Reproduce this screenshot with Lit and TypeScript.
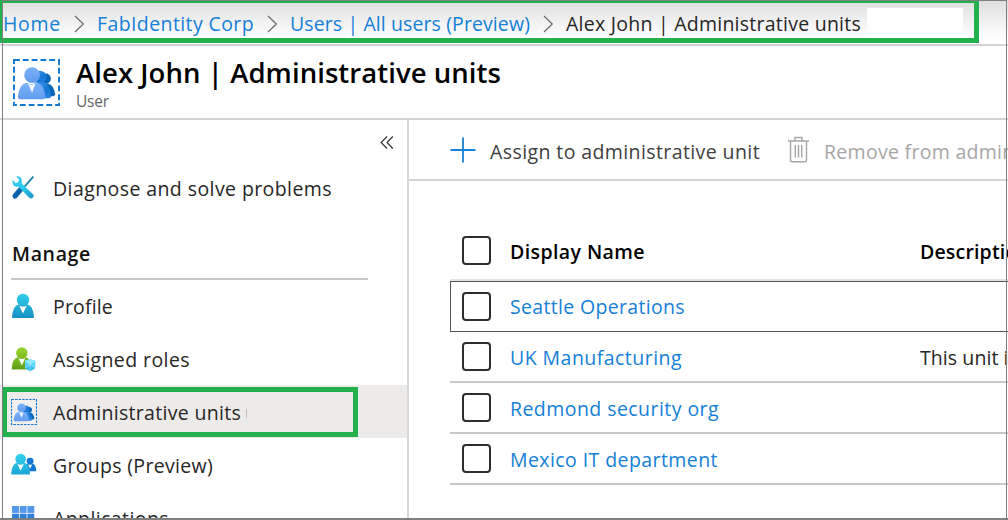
import { LitElement, html, css, svg } from "lit";
import { customElement, property, query } from "lit/decorators.js";

/* Single-line label that spaces its letters to fill a given width. */
@customElement("fit-text")
class FitText extends LitElement {
  static styles = css`
    :host { display: block; white-space: pre; flex: none; }
    .t { display: inline-block; }
  `;
  @property() text = "";
  @property({ type: Number }) w = 0;
  @query(".t") el!: HTMLElement;
  render() {
    return html`<span class="t">${this.text}</span>`;
  }
  updated() {
    this.fit();
    document.fonts.ready.then(() => this.fit());
  }
  fit() {
    this.el.style.letterSpacing = "0px";
    const natural = this.el.getBoundingClientRect().width;
    this.el.style.letterSpacing = (this.w - natural) / this.text.length + "px";
  }
}

const person = (fill: string, notch = "#fff") => svg`
  <path fill=${fill} d="M1 24.2Q1.6 12.5 8 11.2L12 13L16 11.2Q22.4 12.5 23 24.2Q23 25 22 25H2Q1 25 1 24.2Z"/>
  <path fill=${notch} d="M8.2 12.4L12 20.5L15.8 12.4Q12 14.8 8.2 12.4Z"/>
  <circle cx="12" cy="7" r="6.2" fill=${fill}/>`;

const adminUnits = (size: number, stroke: number, dash: string) => html`
  <svg width=${size} height=${size} viewBox="0 0 48 48">
    <defs>
      <linearGradient id="a1" x1="0" y1="0" x2="0" y2="1"><stop offset="0" stop-color="#7cb2fa"/><stop offset="1" stop-color="#629bef"/></linearGradient>
      <linearGradient id="a2" x1="0" y1="0" x2="1" y2="1"><stop offset="0" stop-color="#4a9ae8"/><stop offset=".6" stop-color="#1478d6"/><stop offset="1" stop-color="#2f86e4"/></linearGradient>
    </defs>
    <rect x="1" y="1" width="46" height="46" fill="#fff" fill-opacity=".3" stroke="#1379d3" stroke-width=${stroke} stroke-dasharray=${dash}/>
    <circle cx="33.5" cy="20" r="5.2" fill="#0766b8"/>
    <path d="M28 25H36Q42 27 43 36Q43 37.5 41 38H28Z" fill="#0766b8"/>
    <circle cx="27.5" cy="18.5" r="6.5" fill="url(#a2)"/>
    <path d="M22 24H32Q38 27 38.8 38Q38.8 40 37 40H22Z" fill="url(#a2)"/>
    <path d="M5 38.5Q6 26 13.5 24.2L19 26L24.500 24.200Q32 26 33.200 38.500Q33.300 41 31 41H7Q5 41 5 38.500Z" fill="url(#a1)"/>
    <path d="M15.300 25L19.500 34.500L23 25Q19 27.500 15.300 25Z" fill="#f4f8ff"/>
    <circle cx="19.500" cy="16.500" r="8" fill="url(#a1)"/>
  </svg>`;

const icons: Record<string, unknown> = {
  tools: html`<svg width="24" height="26" viewBox="0 0 24 26">
    <defs>
      <linearGradient id="t1" x1="0" y1="0" x2="1" y2="1"><stop offset="0" stop-color="#35c3ea"/><stop offset=".5" stop-color="#2ccdf0"/><stop offset="1" stop-color="#1590c2"/></linearGradient>
    </defs>
    <path d="M22.300 1.600L13.300 11.800" stroke="#1e87ab" stroke-width="1.900"/>
    <path d="M10.500 13.500L4 21" stroke="#0862a9" stroke-width="5" stroke-linecap="round"/>
    <path fill="url(#t1)" d="M5 1.500Q10 .5 10.800 5.500Q10.900 7 10.500 8.300L22.200 19.500Q23.300 20.800 22.200 22.300Q20.800 24.200 18.600 23L7.200 11.500Q2 12.500 1.600 7.500Q1.400 6 1.800 4.800L4.400 8L7.300 7.200L8 4.300Z"/>
  </svg>`,
  profile: html`<svg width="24" height="26" viewBox="0 0 24 26">
    <defs><linearGradient id="p1" gradientUnits="userSpaceOnUse" x1="0" y1="0" x2="0" y2="25"><stop offset="0" stop-color="#32d0ee"/><stop offset="1" stop-color="#168fc4"/></linearGradient></defs>
    ${person("url(#p1)")}
  </svg>`,
  roles: html`<svg width="25" height="26" viewBox="0 0 25 26">
    <defs><linearGradient id="r1" gradientUnits="userSpaceOnUse" x1="0" y1="0" x2="0" y2="25"><stop offset="0" stop-color="#9bd72b"/><stop offset="1" stop-color="#5f9f18"/></linearGradient></defs>
    <g transform="translate(-.2 .6) scale(.92)">${person("url(#r1)")}</g>
    <path d="M14 14.800L19 13L24.300 14.800V22L19 25.300L14 22Z" fill="#55d5f7"/>
    <path d="M14 14.800L19 18.500L24.300 14.800L19 13Z" fill="#8ce9ff"/>
    <path d="M19 18.500L24.300 22L19 25.300L14 22Z" fill="#35bdec"/>
    <path d="M14 14.800L24.300 22M24.300 14.800L14 22M19 13V25.300" stroke="#b7f2ff" stroke-width=".6"/>
  </svg>`,
  admin: adminUnits(26, 2, "4.500 2"),
  groups: html`<svg width="26" height="24" viewBox="0 0 26 24">
    <defs><linearGradient id="g1" gradientUnits="userSpaceOnUse" x1="0" y1="0" x2="0" y2="25"><stop offset="0" stop-color="#35d3ee"/><stop offset="1" stop-color="#1aa5d4"/></linearGradient></defs>
    <g transform="translate(12.400 4.200) scale(.56)">${person("#0f78d4")}</g>
    <g transform="translate(-.7 0) scale(.86)">${person("url(#g1)")}</g>
  </svg>`,
  apps: html`<svg width="24" height="24" viewBox="0 0 24 24">
    ${[0, 1, 2].map((r) => [0, 1, 2].map((c) => svg`<rect x=${1 + c * 7.700} y=${r * 7.700} width="6.900" height="6.900" fill=${r ? "#2f80dc" : "#5597e8"}/>`))}
  </svg>`,
};

const chevron = html`<svg class="chev" width="11" height="18" viewBox="0 0 11 18"><path d="M1 1L9.300 9L1 17" fill="none" stroke="#6b6b6b" stroke-width="1.200"/></svg>`;

@customElement("app-root")
class AppRoot extends LitElement {
  static styles = css`
    :host {
      display: block; position: relative; width: 1008px; height: 520px; overflow: hidden;
      background: #fff; color: #262626; font: 400 19.500px/28px "Open Sans", "Noto Sans", sans-serif;
    }
    * { box-sizing: border-box; }
    svg { display: block; flex: none; }
    .crumbs {
      height: 46px; padding: 0 0 0 3px; display: flex; align-items: center;
      border-bottom: 2px solid #d4d4d4; background: linear-gradient(#dedede, #fff 38px);
    }
    .crumbs fit-text { margin-top: 3px; }
    .link { color: #1480d8; }
    .chev { margin: 3px 12px 0 13px; }
    .blank { width: 96px; height: 30px; margin: 2px 0 0 6px; background: #fff; }
    .head { height: 74px; border-bottom: 2px solid #d4d4d4; padding: 13px 0 0 13px; display: flex; gap: 16px; }
    .title { font-size: 27.500px; font-weight: 600; line-height: 32px; color: #000; margin-top: -2px; }
    .sub { font-size: 15.500px; line-height: 22px; color: #666; margin-top: 1px; }
    .main { display: flex; height: 400px; }
    .side { width: 409px; flex: none; border-right: 2px solid #d8d8d8; overflow: hidden; }
    .collapse { height: 41px; padding: 16px 13px 0 0; display: flex; justify-content: flex-end; }
    .item { height: 53px; padding-left: 11px; display: flex; align-items: center; }
    .item .ic { width: 42px; flex: none; }
    .item fit-text { margin-top: 2px; }
    .on { background: #edebe9; }
    .tick { width: 1px; height: 9px; margin: 3px 0 0 5px; background: #c4c2c0; }
    .sec { height: 66px; margin: 0 39px 0 11px; padding: 26px 0 0 1px; border-bottom: 2px solid #c8c8c8; font-weight: 600; color: #111; }
    .list { margin-top: -1px; }
    .content { flex: 1; min-width: 0; overflow: hidden; }
    .tools { height: 61px; border-bottom: 2px solid #d4d4d4; padding-left: 41px; display: flex; align-items: center; color: #404040; }
    .tools fit-text { margin: 5px 0 0 14px; }
    .tools .bin { margin-left: 28px; }
    .tools .off { color: #a6a6a6; margin-left: 15px; }
    .table { margin: 41px 0 0 41px; }
    .row { height: 51px; border-bottom: 2px solid #c8c8c8; padding-left: 12px; display: flex; align-items: center; }
    .hd { height: 59px; font-weight: 600; color: #000; border-color: #e3e3e3; }
    .focus { border: 1px solid #555; border-right: 0; height: 51px; padding-left: 11px; }
    .cb { width: 29px; height: 29px; border: 2px solid #2e2e2e; border-radius: 4px; flex: none; }
    .name { width: 410px; margin-left: 19px; flex: none; }
    .row .name, .row .desc { margin-top: 2px; }
    .row.focus .name { margin-top: 0; }
    .note { position: absolute; border: 5px solid #22b14c; }
    .n1 { left: -2px; top: -2px; width: 981px; height: 45px; }
    .n2 { left: 2px; top: 387px; width: 356px; height: 50px; }
    .frame { position: absolute; left: 2px; top: 0; width: 1005px; height: 520px; border: 1px solid #7f7f7f; border-bottom-width: 2px; }
    .edge { position: absolute; left: 0; top: 518px; width: 1008px; height: 2px; background: #7f7f7f; }
  `;

  item(icon: string, text: string, w: number, on = false) {
    return html`<div class="item ${on ? "on" : ""}">
      <div class="ic">${icons[icon]}</div>
      <fit-text text=${text} w=${w}></fit-text>
      ${on ? html`<div class="tick"></div>` : ""}
    </div>`;
  }

  row(name: string, w: number, desc = "", dw = 0, cls = "") {
    return html`<div class="row ${cls}">
      <div class="cb"></div>
      <div class="name ${cls === "hd" ? "" : "link"}"><fit-text text=${name} w=${w}></fit-text></div>
      ${desc ? html`<fit-text class="desc" text=${desc} w=${dw}></fit-text>` : ""}
    </div>`;
  }

  render() {
    return html`
      <div class="crumbs">
        <fit-text class="link" text="Home" w="58"></fit-text>${chevron}
        <fit-text class="link" text="FabIdentity Corp" w="157"></fit-text>${chevron}
        <fit-text class="link" text="Users | All users (Preview)" w="240"></fit-text>${chevron}
        <fit-text text="Alex John | Administrative units" w="295"></fit-text>
        <div class="blank"></div>
      </div>
      <div class="head">
        ${adminUnits(47, 2, "6 3")}
        <div>
          <fit-text class="title" text="Alex John | Administrative units" w="425"></fit-text>
          <fit-text class="sub" text="User" w="33"></fit-text>
        </div>
      </div>
      <div class="main">
        <div class="side">
          <div class="collapse"><svg width="14" height="13" viewBox="0 0 14 13"><path d="M7 .5L1.200 6.500L7 12.500M12.800 .5L7 6.500L12.800 12.500" fill="none" stroke="#333" stroke-width="1.200"/></svg></div>
          ${this.item("tools", "Diagnose and solve problems", 279)}
          <div class="sec"><fit-text text="Manage" w="79"></fit-text></div>
          <div class="list">
            ${this.item("profile", "Profile", 60)}
            ${this.item("roles", "Assigned roles", 137)}
            ${this.item("admin", "Administrative units", 188, true)}
            ${this.item("groups", "Groups (Preview)", 160)}
            ${this.item("apps", "Applications", 116)}
          </div>
        </div>
        <div class="content">
          <div class="tools">
            <svg width="26" height="26" viewBox="0 0 26 26"><path d="M13 .5V25.500M.5 13H25.500" stroke="#1480d8" stroke-width="1.800"/></svg>
            <fit-text text="Assign to administrative unit" w="270"></fit-text>
            <svg class="bin" width="21" height="27" viewBox="0 0 21 27"><path d="M0 5H21M7 5V1.500H14V5M2.500 5V24Q2.500 25.800 4.300 25.800H16.700Q18.500 25.800 18.500 24V5M7.300 9V21.500M10.500 9V21.500M13.700 9V21.500" fill="none" stroke="#a6a6a6" stroke-width="1.400"/></svg>
            <fit-text class="off" text="Remove from administrative unit" w="308"></fit-text>
          </div>
          <div class="table">
            ${this.row("Display Name", 135, "Description", 110, "hd")}
            ${this.row("Seattle Operations", 175, "", 0, "focus")}
            ${this.row("UK Manufacturing", 172, "This unit is", 98)}
            ${this.row("Redmond security org", 209)}
            ${this.row("Mexico IT department", 208)}
          </div>
        </div>
      </div>
      <div class="note n1"></div>
      <div class="note n2"></div>
      <div class="frame"></div>
      <div class="edge"></div>
    `;
  }
}
